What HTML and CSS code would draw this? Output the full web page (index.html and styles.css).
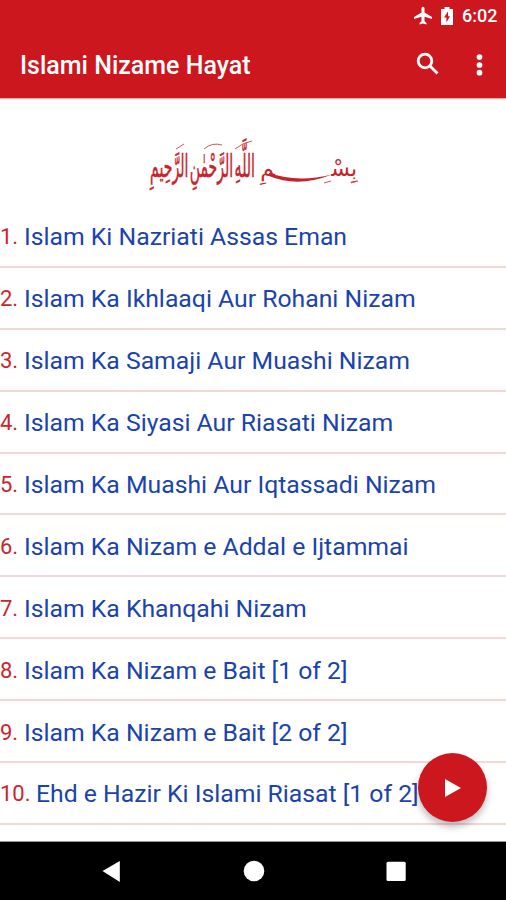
FILE: index.html
```html
<!DOCTYPE html>
<html lang="en">
<head>
<meta charset="utf-8">
<title>Islami Nizame Hayat</title>
<link rel="stylesheet" href="styles.css">
</head>
<body>
<div class="screen">
  <header class="header">
    <div class="status">
      <svg class="plane" viewBox="0 0 20 20"><path d="M19 13v-2l-7.500-4.500V2.200a1.500 1.500 0 0 0-3 0v4.300L1 11v2l7.500-2.200v4.500L6.500 17v1.500L10 17.500l3.500 1V17l-2-1.700v-4.500z"/></svg>
      <svg class="battery" viewBox="0 0 12 18"><path fill-rule="evenodd" d="M3.500 0h5v2H12v16H0V2h3.500zM7 4.500L3 10.500h2.400V15.500L9 9.300H7z"/></svg>
      <span class="clock">6:02</span>
    </div>
    <div class="toolbar">
      <h1 class="title">Islami Nizame Hayat</h1>
      <svg class="search" viewBox="0 0 24 24"><circle cx="9" cy="9" r="6.800"/><path d="M14 14l7.500 7.500"/></svg>
      <svg class="more" viewBox="0 0 6 20"><circle cx="3" cy="2.800" r="2.600"/><circle cx="3" cy="10" r="2.600"/><circle cx="3" cy="17" r="2.600"/></svg>
    </div>
  </header>
  <main class="content">
    <svg class="bismillah" viewBox="0 0 212 60" lang="ar">
      <text class="phrase" transform="translate(107 39) scale(.76 1)" x="0" y="0" textLength="138" lengthAdjust="spacingAndGlyphs" direction="rtl">اللَّهِ الرَّحْمٰنِ الرَّحِيمِ</text>
      <text class="opening" x="209" y="38" direction="rtl">بِسْ&#x200D;</text>
      <text class="opening" x="127" y="38" direction="rtl">&#x200D;مِ</text>
      <path class="sweep" d="M121 35Q149 45 184 36.500Q150 50 121 38z"/>
      <path class="marks" d="M28 11l8-5M56 11q8-7 18-4M87 11q7-6 17-8M176 45l7-2M203 45l7-2"/>
    </svg>
    <ol class="list">
      <li class="row"><span class="num">1.</span><span class="name">Islam Ki Nazriati Assas Eman</span></li>
      <li class="row"><span class="num">2.</span><span class="name">Islam Ka Ikhlaaqi Aur Rohani Nizam</span></li>
      <li class="row"><span class="num">3.</span><span class="name">Islam Ka Samaji Aur Muashi Nizam</span></li>
      <li class="row"><span class="num">4.</span><span class="name">Islam Ka Siyasi Aur Riasati Nizam</span></li>
      <li class="row"><span class="num">5.</span><span class="name">Islam Ka Muashi Aur Iqtassadi Nizam</span></li>
      <li class="row"><span class="num">6.</span><span class="name">Islam Ka Nizam e Addal e Ijtammai</span></li>
      <li class="row"><span class="num">7.</span><span class="name">Islam Ka Khanqahi Nizam</span></li>
      <li class="row"><span class="num">8.</span><span class="name">Islam Ka Nizam e Bait [1 of 2]</span></li>
      <li class="row"><span class="num">9.</span><span class="name">Islam Ka Nizam e Bait [2 of 2]</span></li>
      <li class="row"><span class="num wide">10.</span><span class="name">Ehd e Hazir Ki Islami Riasat [1 of 2]</span></li>
    </ol>
    <button class="fab" aria-label="Play"><svg viewBox="0 0 16 18"><path d="M0 0v18l16-9z"/></svg></button>
  </main>
  <nav class="navbar">
    <svg viewBox="0 0 22 22"><path d="M2.500 11L19.800 1v21z"/></svg>
    <svg viewBox="0 0 22 22"><circle cx="11" cy="11" r="10.300"/></svg>
    <svg viewBox="0 0 22 22"><rect x="1.500" y="1.800" width="19.200" height="19.200" rx="1.500"/></svg>
  </nav>
</div>
</body>
</html>
```
FILE: styles.css
```css
* { box-sizing: border-box; }
body { margin: 0; background: #fff; font-family: Roboto, "Liberation Sans", sans-serif; }
.screen { width: 506px; height: 900px; display: flex; flex-direction: column; overflow: hidden; }
.header { height: 98px; flex: none; background: #cc171e; color: #fff; box-shadow: 0 1px 1px #e9a5a5; }
.status { height: 32px; padding: 0 9px 0 0; display: flex; justify-content: flex-end; align-items: center; }
.status svg { fill: #fff; }
.plane { width: 20px; height: 20px; margin-right: 8px; }
.battery { width: 12px; height: 18px; margin-right: 9px; }
.clock { width: 35px; font-size: 18px; font-weight: 500; line-height: 32px; white-space: nowrap; }
.toolbar { height: 66px; padding: 0 23px 0 20px; display: flex; align-items: center; }
.title { flex: 1; margin: 2px 0 0; font-size: 25px; font-weight: 500; line-height: 30px; white-space: nowrap; }
.search { width: 24px; height: 24px; margin: -2px 36px 0 0; fill: none; stroke: #fff; stroke-width: 2.8; }
.more { width: 7px; height: 22px; fill: #fff; }
.content { position: relative; flex: 1; min-height: 0; border-bottom: 1px solid #999; }
.bismillah { display: block; width: 212px; height: 60px; margin: 40px 0 8px 148px; fill: #c8232a; overflow: visible; }
.phrase { font: 31px "DejaVu Sans", sans-serif; word-spacing: -7px; stroke: #c8232a; stroke-width: .5; }
.opening { font: 22px "DejaVu Sans", sans-serif; }
.marks { fill: none; stroke: #d4555a; stroke-width: 1; }
.list { list-style: none; margin: 0; padding: 0; }
.row { height: 61.9px; padding-top: 2px; display: flex; align-items: center; border-bottom: 2px solid #f5d7da; white-space: nowrap; }
.num { width: 24px; flex: none; font-size: 22px; color: #cc252d; }
.wide { width: 36px; }
.name { font-size: 24.75px; color: #1a43ad; }
.fab { position: absolute; left: 418px; top: 655px; width: 69px; height: 69px; padding: 0; border: 0; border-radius: 50%; background: #cc171e; box-shadow: 0 5px 7px rgba(0,0,0,.25); display: flex; align-items: center; justify-content: center; }
.fab svg { width: 16px; height: 18px; fill: #fff; }
.navbar { height: 58px; flex: none; background: #000; display: flex; align-items: center; justify-content: space-between; padding: 0 99px 0 100px; }
.navbar svg { width: 22px; height: 22px; fill: #fff; }
```
